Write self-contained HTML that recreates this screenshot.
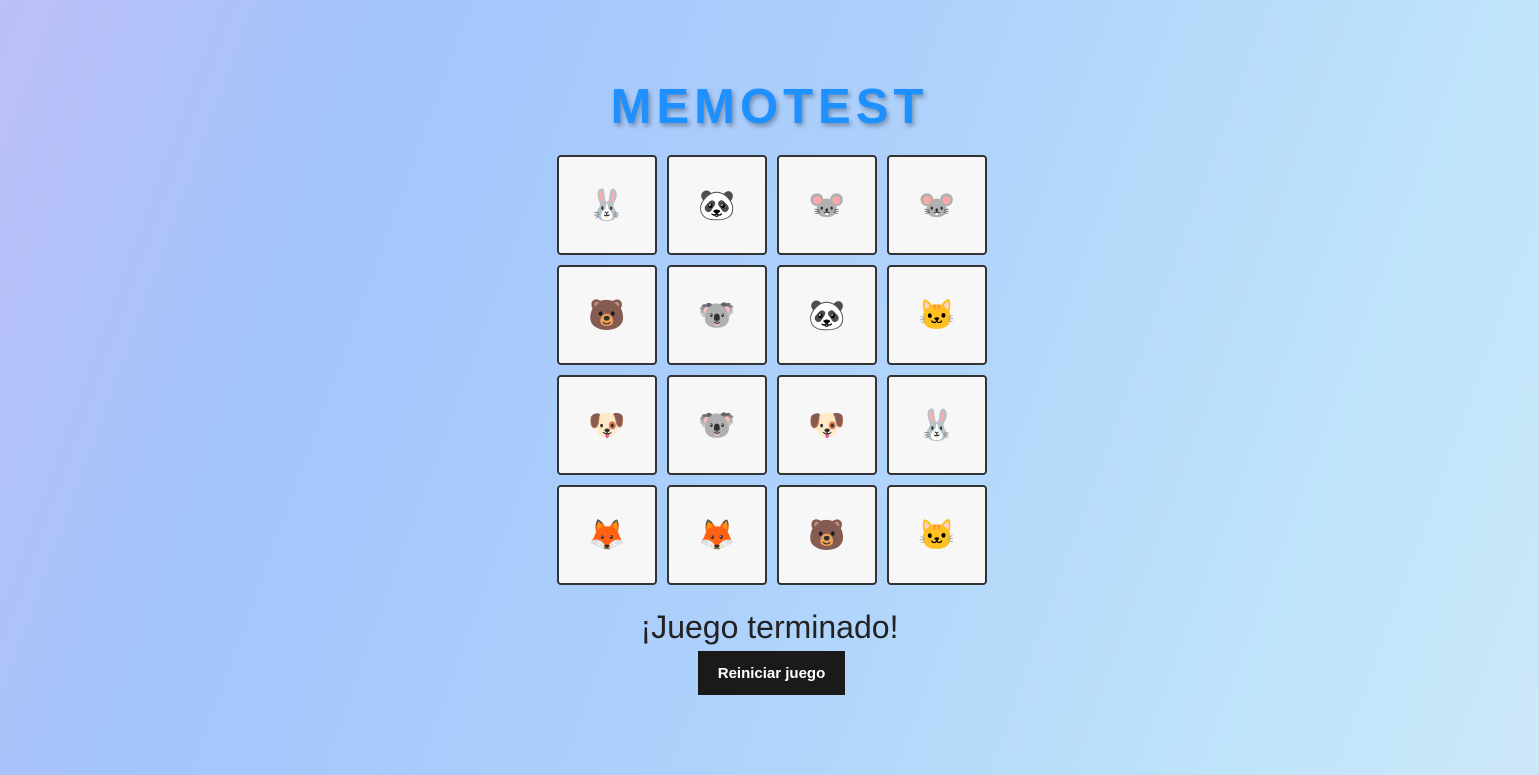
<!DOCTYPE html>
<html><head><meta charset="utf-8"><style>
html,body{margin:0;height:100%;}
body{width:1539px;height:775px;overflow:hidden;background:linear-gradient(110deg,#bdbff7 0%,#a3c5fc 22%,#acd0fb 50%,#c0e5fa 85%,#cde6fa 100%);font-family:"Liberation Sans",sans-serif;position:relative;}
h1{position:absolute;left:0;right:0;top:78px;margin:0;text-align:center;font-size:49px;font-weight:900;letter-spacing:5px;color:#1e90ff;text-shadow:2px 3px 5px rgba(0,0,0,.3);line-height:58px;}
.grid{position:absolute;left:557px;top:155px;display:grid;grid-template-columns:repeat(4,100px);grid-gap:10px;}
.c{width:96px;height:96px;border:2px solid #333;border-radius:4px;background:#f7f7f7;display:flex;align-items:center;justify-content:center;font-size:30px;font-family:"Noto Color Emoji","DejaVu Sans",sans-serif;}
.msg{position:absolute;left:0;right:0;top:606px;text-align:center;font-size:32px;color:#222;line-height:42px;}
.btn{position:absolute;left:698px;top:651px;width:147px;height:44px;background:#1a1a1a;color:#fff;font-size:15px;font-weight:bold;display:flex;align-items:center;justify-content:center;}
</style></head><body>
<h1>MEMOTEST</h1>
<div class="grid">
<div class="c">🐰</div><div class="c">🐼</div><div class="c">🐭</div><div class="c">🐭</div>
<div class="c">🐻</div><div class="c">🐨</div><div class="c">🐼</div><div class="c">🐱</div>
<div class="c">🐶</div><div class="c">🐨</div><div class="c">🐶</div><div class="c">🐰</div>
<div class="c">🦊</div><div class="c">🦊</div><div class="c">🐻</div><div class="c">🐱</div>
</div>
<div class="msg">¡Juego terminado!</div>
<div class="btn">Reiniciar juego</div>
</body></html>
